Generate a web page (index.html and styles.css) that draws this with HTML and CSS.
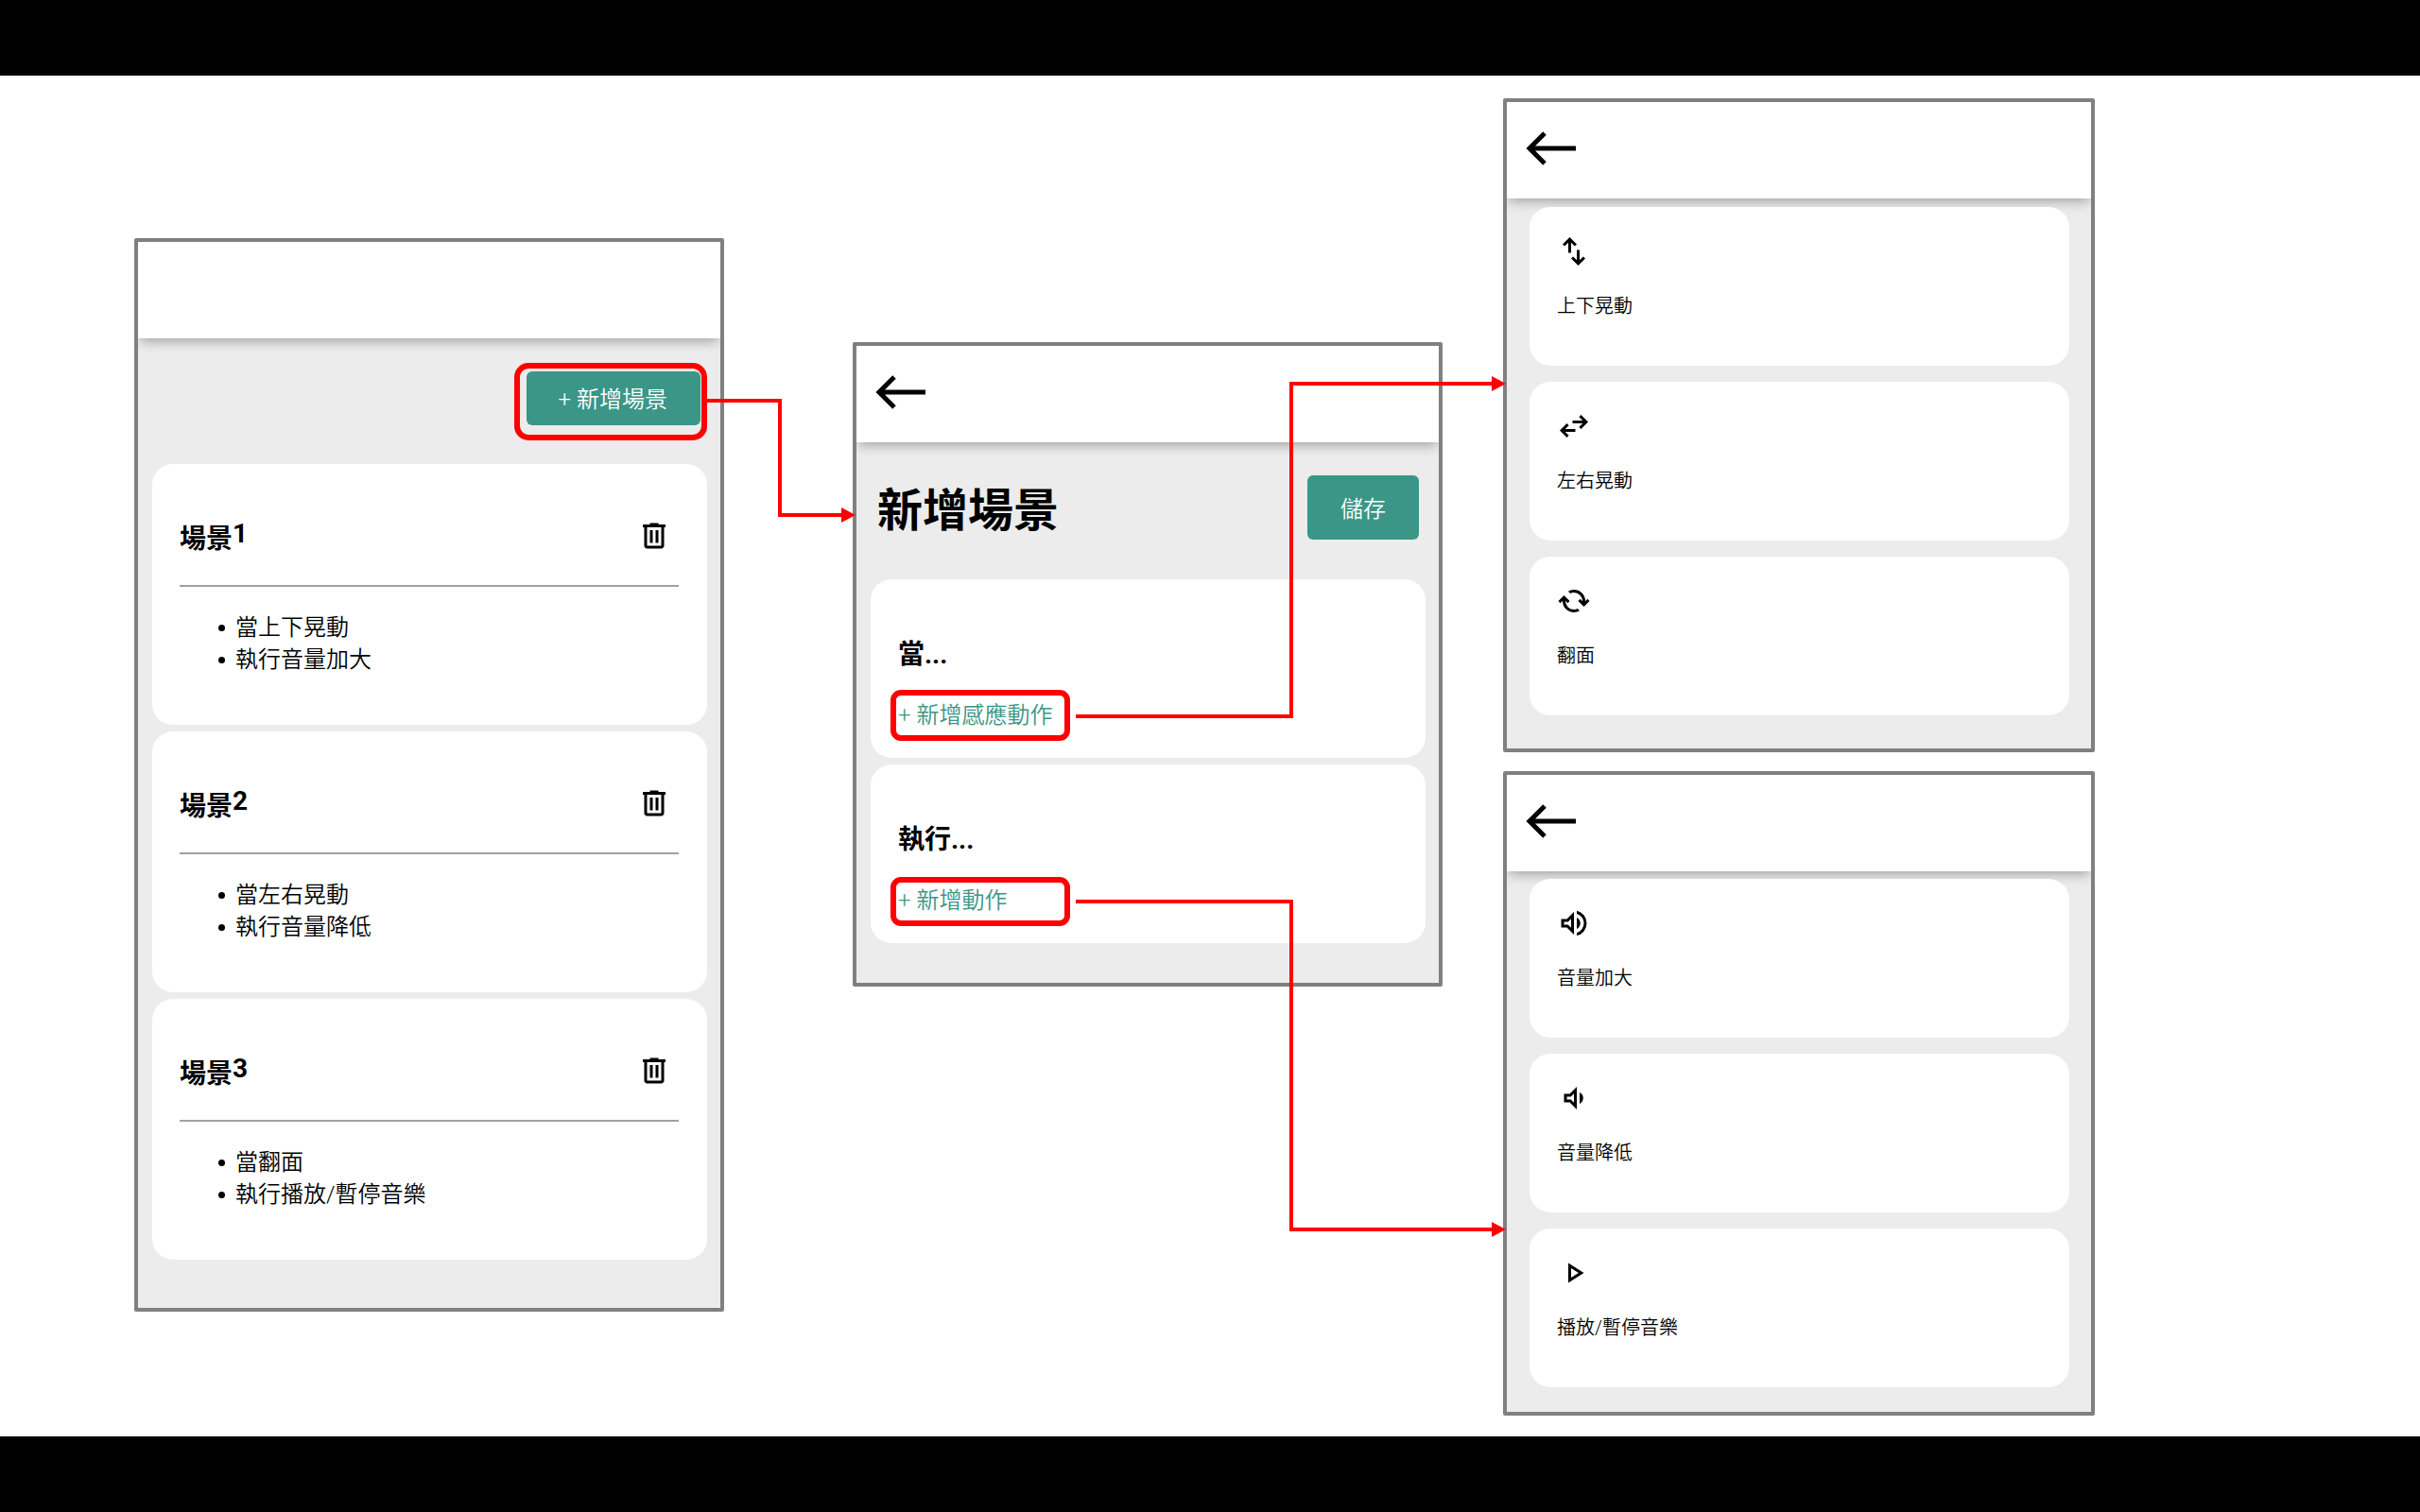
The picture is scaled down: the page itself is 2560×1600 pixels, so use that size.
FILE: index.html
```html
<!DOCTYPE html>
<html lang="zh-Hant">
<head>
<meta charset="utf-8">
<meta name="viewport" content="width=device-width, initial-scale=1">
<title>新增場景流程</title>
<link rel="stylesheet" href="styles.css">
</head>
<body>
<svg class="sprite" aria-hidden="true">
  <symbol id="back" viewBox="0 0 56 36"><path d="M20 2 4 18 20 34M4 18H53" fill="none" stroke="#000" stroke-width="5"/></symbol>
  <symbol id="trash" viewBox="0 -960 960 960"><path d="M280-120q-33 0-56.500-23.500T200-200v-520h-40v-80h200v-40h240v40h200v80h-40v520q0 33-23.500 56.500T680-120H280Zm400-600H280v520h400v-520ZM360-280h80v-360h-80v360Zm160 0h80v-360h-80v360Z"/></symbol>
  <symbol id="vertical" viewBox="0 -960 960 960"><path d="M320-440v-287L217-624l-57-56 200-200 200 200-57 56-103-103v287h-80ZM600-80 400-280l57-56 103 103v-287h80v287l103-103 57 56L600-80Z"/></symbol>
  <symbol id="horizontal" viewBox="0 -960 960 960"><path d="M280-160 80-360l200-200 56 57-103 103h287v80H233l103 103-56 57Zm400-240-56-57 103-103H440v-80h287L624-743l56-57 200 200-200 200Z"/></symbol>
  <symbol id="flip" viewBox="0 -960 960 960"><path d="M482-160q-134 0-228-93t-94-227v-7l-64 64-56-56 160-160 160 160-56 56-64-64v7q0 100 70.500 170T482-240q26 0 51-6t49-18l60 60q-38 22-78 33t-82 11Zm278-161L600-481l56-56 64 64v-7q0-100-70.500-170T478-720q-26 0-51 6t-49 18l-60-60q38-22 78-33t82-11q134 0 228 93t94 227v7l64-64 56 56-160 160Z"/></symbol>
  <symbol id="louder" viewBox="0 -960 960 960"><path d="M560-131v-82q90-26 145-100t55-168q0-94-55-168T560-749v-82q124 28 202 125.500T840-481q0 127-78 224.500T560-131ZM120-360v-240h160l200-200v640L280-360H120Zm440 40v-322q47 22 73.500 66t26.500 96q0 51-26.500 94.500T560-320ZM400-606l-86 86H200v80h114l86 86v-252Z"/></symbol>
  <symbol id="quieter" viewBox="0 -960 960 960"><path d="M200-360v-240h160l200-200v640L360-360H200Zm440 40v-322q45 21 72.500 65t27.500 97q0 53-27.500 96T640-320ZM480-606l-86 86H280v80h114l86 86v-252Z"/></symbol>
  <symbol id="play" viewBox="0 -960 960 960"><path d="M320-200v-560l440 280-440 280Zm80-146 210-134-210-134v268Z"/></symbol>
</svg>

<main class="flow">
  <section class="screen screen-list">
    <header class="topbar"></header>
    <div class="content">
      <div class="actions actions-end">
        <button class="btn btn-add" type="button">+ 新增場景</button>
      </div>
      <article class="card">
        <div class="scene-head">
          <h3>場景<span class="num">1</span></h3>
          <button class="icon-btn" type="button" aria-label="刪除場景1"><svg class="icon"><use href="#trash"/></svg></button>
        </div>
        <ul class="steps"><li>當上下晃動</li><li>執行音量加大</li></ul>
      </article>
      <article class="card">
        <div class="scene-head">
          <h3>場景<span class="num">2</span></h3>
          <button class="icon-btn" type="button" aria-label="刪除場景2"><svg class="icon"><use href="#trash"/></svg></button>
        </div>
        <ul class="steps"><li>當左右晃動</li><li>執行音量降低</li></ul>
      </article>
      <article class="card">
        <div class="scene-head">
          <h3>場景<span class="num">3</span></h3>
          <button class="icon-btn" type="button" aria-label="刪除場景3"><svg class="icon"><use href="#trash"/></svg></button>
        </div>
        <ul class="steps"><li>當翻面</li><li>執行播放/暫停音樂</li></ul>
      </article>
    </div>
  </section>

  <section class="screen screen-edit">
    <header class="topbar"><button class="icon-btn" type="button" aria-label="返回"><svg class="back"><use href="#back"/></svg></button></header>
    <div class="content">
      <div class="actions">
        <h1>新增場景</h1>
        <button class="btn btn-save" type="button">儲存</button>
      </div>
      <article class="card">
        <h3 class="rule-title">當...</h3>
        <a class="add-link" href="#motions">+ 新增感應動作</a>
      </article>
      <article class="card">
        <h3 class="rule-title">執行...</h3>
        <a class="add-link" href="#commands">+ 新增動作</a>
      </article>
    </div>
  </section>

  <div class="pickers">
    <section class="screen screen-motions" id="motions">
      <header class="topbar"><button class="icon-btn" type="button" aria-label="返回"><svg class="back"><use href="#back"/></svg></button></header>
      <div class="options">
        <button class="option" type="button"><svg class="icon"><use href="#vertical"/></svg><span>上下晃動</span></button>
        <button class="option" type="button"><svg class="icon"><use href="#horizontal"/></svg><span>左右晃動</span></button>
        <button class="option" type="button"><svg class="icon"><use href="#flip"/></svg><span>翻面</span></button>
      </div>
    </section>
    <section class="screen screen-commands" id="commands">
      <header class="topbar"><button class="icon-btn" type="button" aria-label="返回"><svg class="back"><use href="#back"/></svg></button></header>
      <div class="options">
        <button class="option" type="button"><svg class="icon"><use href="#louder"/></svg><span>音量加大</span></button>
        <button class="option" type="button"><svg class="icon"><use href="#quieter"/></svg><span>音量降低</span></button>
        <button class="option" type="button"><svg class="icon"><use href="#play"/></svg><span>播放/暫停音樂</span></button>
      </div>
    </section>
  </div>

  <svg class="links" aria-hidden="true">
    <g fill="none" stroke="#f00" stroke-width="6">
      <rect x="547" y="307" width="198" height="76" rx="12"/>
      <rect x="945" y="653" width="184" height="48" rx="8"/>
      <rect x="945" y="851" width="184" height="46" rx="8"/>
    </g>
    <g fill="none" stroke="#f00" stroke-width="4">
      <path d="M748 344H825V465H892"/>
      <path d="M1138 678H1366V326H1580"/>
      <path d="M1138 874H1366V1221H1580"/>
    </g>
    <g fill="#f00">
      <path d="M890 457 905 465 890 473Z"/>
      <path d="M1578 318 1593 326 1578 334Z"/>
      <path d="M1578 1213 1593 1221 1578 1229Z"/>
    </g>
  </svg>
</main>
</body>
</html>
```
FILE: styles.css
```css
* { box-sizing: border-box; }

body {
  margin: 0;
  padding: 80px 0;
  background: #000;
  color: #000;
  font-family: Roboto, "Noto Sans CJK TC", sans-serif;
  font-size: 24px;
  font-weight: 350;
  line-height: 34px;
}

h1, h3, ul { margin: 0; padding: 0; }

button {
  border: 0;
  font: inherit;
  color: inherit;
  cursor: pointer;
}

.sprite { display: none; }

/* Canvas with the four screens */
.flow {
  position: relative;
  display: flex;
  align-items: flex-start;
  min-height: calc(100vh - 160px);
  padding-left: 142px;
  background: #fff;
}

.links {
  position: absolute;
  inset: 0;
  width: 100%;
  height: 100%;
  pointer-events: none;
}

.screen {
  flex: none;
  width: 624px;
  overflow: hidden;
  border: 4px solid #808080;
  border-radius: 2px;
  background: #ececec;
}

.screen-list { margin-top: 172px; padding-bottom: 51px; }
.screen-edit { margin: 282px 64px 0 136px; padding-bottom: 42px; }

.pickers {
  display: flex;
  flex-direction: column;
  gap: 20px;
  padding: 24px 0 22px;
}

.pickers .screen { width: 626px; }
.screen-motions { padding-bottom: 35px; }
.screen-commands { padding-bottom: 26px; }

/* Top bar */
.topbar {
  min-height: 102px;
  padding: 31px 20px 0;
  background: #fff;
  box-shadow: 0 5px 12px -2px rgba(0, 0, 0, .32);
}

.icon-btn {
  display: block;
  padding: 0;
  background: none;
}

.icon, .back { display: block; height: 36px; }
.icon { width: 36px; }
.back { width: 56px; }

/* Scene list and editor */
.content {
  display: flex;
  flex-direction: column;
  gap: 7px;
  padding: 35px 14px 0 15px;
}

.actions {
  display: flex;
  align-items: center;
  justify-content: space-between;
  padding: 0 7px 35px;
}

.actions-end {
  justify-content: flex-end;
  padding-bottom: 34px;
}

h1 {
  padding-top: 8px;
  font-size: 48px;
  line-height: 60px;
}

.btn {
  border-radius: 6px;
  background: #3b9687;
  color: #fff;
}

.btn-add { padding: 13px 35px 10px 34px; }
.btn-save { padding: 19px 35px 15px; }

.card {
  padding: 57px 30px 28px 29px;
  border-radius: 22px;
  background: #fff;
}

h3 {
  font-size: 28px;
  line-height: 46px;
}

.num { vertical-align: 6px; line-height: 20px; }

.scene-head {
  display: flex;
  align-items: flex-start;
  justify-content: space-between;
  padding-bottom: 25px;
  border-bottom: 2px solid #a0a0a0;
}

.scene-head .icon-btn { padding: 1px 8px 0 0; }

.steps {
  padding: 26px 0 24px 41px;
  list-style: none;
}

.steps li {
  display: flex;
  align-items: center;
  gap: 11px;
}

.steps li::before {
  content: "";
  width: 7px;
  height: 7px;
  border-radius: 50%;
  background: #000;
}

.rule-title { margin-bottom: 24px; }

.add-link {
  display: block;
  color: #3b9687;
  text-decoration: none;
}

/* Picker screens */
.options {
  display: flex;
  flex-direction: column;
  gap: 17px;
  padding: 9px 23px 0 24px;
}

.screen-commands .options { padding-top: 8px; }

.option {
  display: flex;
  flex-direction: column;
  gap: 26px;
  padding: 29px 29px 49px;
  border-radius: 22px;
  background: #fff;
  font-size: 20px;
  line-height: 28px;
  text-align: left;
}
```
